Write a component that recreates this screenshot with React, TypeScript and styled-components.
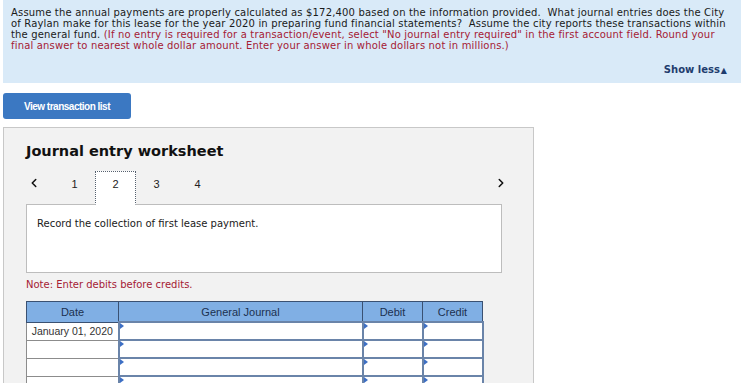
import React from 'react';
import styled, { createGlobalStyle } from 'styled-components';
import { ChevronLeft, ChevronRight } from 'lucide-react';

const GlobalStyle = createGlobalStyle`
  body {
    margin: 0;
    background: #ffffff;
    font-family: "DejaVu Sans", Verdana, sans-serif;
    color: #1a1a1a;
  }
`;

const Banner = styled.section`
  margin: 0 8px 0 3px;
  padding: 7px 8px 6px 8px;
  background: #d9eaf8;
`;

const Question = styled.p`
  margin: 0;
  font-size: 10px;
  line-height: 11px;
  letter-spacing: 0.17px;
  white-space: nowrap;
  color: #1a1a1a;
`;

const Hint = styled.span`
  color: #a52034;
`;

const ShowLessRow = styled.div`
  display: flex;
  justify-content: flex-end;
  margin-top: 13px;
  padding-right: 6px;
`;

const ShowLess = styled.span`
  font-size: 10px;
  line-height: 12px;
  font-weight: bold;
  color: #1f3d6e;
`;

const Arrow = styled.span`
  font-size: 8px;
  margin-left: 1px;
`;

const ListButton = styled.button`
  display: block;
  margin: 10px 0 0 3px;
  width: 128px;
  height: 26px;
  border: none;
  border-radius: 3px;
  background: #3b78c2;
  color: #ffffff;
  font-family: "Liberation Sans", Arial, sans-serif;
  font-size: 10px;
  font-weight: bold;
  letter-spacing: -0.5px;
  padding: 0;
`;

const Panel = styled.div`
  box-sizing: border-box;
  margin: 8px 0 0 3px;
  width: 531px;
  height: 300px;
  background: #f2f2f2;
  border: 1px solid #c8c8c8;
  border-bottom: none;
  padding: 14px 0 0 22px;
`;

const Title = styled.h2`
  margin: 0;
  font-size: 14.5px;
  line-height: 18px;
  font-weight: bold;
  color: #111;
`;

const NavRow = styled.div`
  display: flex;
  align-items: flex-start;
  width: 482px;
  margin-top: 11px;
  margin-bottom: -1px;
`;

const Chevron = styled.span<{ $right?: boolean }>`
  box-sizing: border-box;
  display: flex;
  justify-content: ${p => (p.$right ? 'flex-end' : 'flex-start')};
  width: 28px;
  padding-top: 5px;
  padding-left: ${p => (p.$right ? '0' : '1px')};
  margin-left: ${p => (p.$right ? 'auto' : '0')};
  color: #111;
`;

const Tab = styled.span<{ $active?: boolean }>`
  position: relative;
  z-index: 1;
  box-sizing: border-box;
  width: 41px;
  height: 34px;
  padding-top: 6px;
  text-align: center;
  font-family: "Liberation Sans", Arial, sans-serif;
  font-size: 11px;
  line-height: 13px;
  color: #222;
  background: ${p => (p.$active ? '#ffffff' : 'transparent')};
  border: 1px dotted ${p => (p.$active ? '#55606e' : 'transparent')};
  border-bottom-color: ${p => (p.$active ? '#ffffff' : 'transparent')};
`;

const DescBox = styled.div`
  box-sizing: border-box;
  width: 476px;
  height: 69px;
  background: #ffffff;
  border: 1px solid #bdbdbd;
  padding: 13px 0 0 10px;
  font-size: 10px;
  line-height: 12px;
  color: #1a1a1a;
`;

const Note = styled.div`
  margin-top: 6px;
  font-size: 10px;
  line-height: 12px;
  color: #a52034;
`;

const Table = styled.table`
  margin-top: 10px;
  border-collapse: collapse;
  font-family: "Liberation Sans", Arial, sans-serif;
  font-size: 11px;
`;

const Th = styled.th<{ $w: number }>`
  width: ${p => p.$w}px;
  height: 19px;
  padding: 0;
  background: #80afe4;
  border: 1px solid #3a5172;
  font-weight: normal;
  color: #1c3150;
  text-align: center;
`;

const DateCell = styled.td`
  height: 17px;
  padding: 0;
  background: #ffffff;
  border: 1px solid #8c8c8c;
  color: #333;
  font-size: 10.5px;
  text-align: center;
`;

const InputCell = styled.td`
  position: relative;
  height: 16px;
  padding: 0;
  background: #ffffff;
  border: 2px solid #6a84a9;

  &::before {
    content: '';
    position: absolute;
    left: 0;
    top: 0;
    border-top: 3px solid transparent;
    border-bottom: 3px solid transparent;
    border-left: 4px solid #3d6fc4;
  }
`;

const columns = [
  { label: 'Date', w: 91 },
  { label: 'General Journal', w: 243 },
  { label: 'Debit', w: 59 },
  { label: 'Credit', w: 59 },
];

const rows = ['January 01, 2020', '', '', ''];

export default function App() {
  return (
    <>
      <GlobalStyle />
      <Banner>
        <Question>
          Assume the annual payments are properly calculated as $172,400 based on the information provided.&nbsp; What journal entries does the City
          <br />
          of Raylan make for this lease for the year 2020 in preparing fund financial statements?&nbsp; Assume the city reports these transactions within
          <br />
          the general fund. <Hint>(If no entry is required for a transaction/event, select "No journal entry required" in the first account field. Round your
          <br />
          final answer to nearest whole dollar amount. Enter your answer in whole dollars not in millions.)</Hint>
        </Question>
        <ShowLessRow>
          <ShowLess>
            Show less<Arrow>▲</Arrow>
          </ShowLess>
        </ShowLessRow>
      </Banner>
      <ListButton>View transaction list</ListButton>
      <Panel>
        <Title>Journal entry worksheet</Title>
        <NavRow>
          <Chevron>
            <ChevronLeft size={14} strokeWidth={2.6} />
          </Chevron>
          {[1, 2, 3, 4].map(n => (
            <Tab key={n} $active={n === 2}>
              {n}
            </Tab>
          ))}
          <Chevron $right>
            <ChevronRight size={14} strokeWidth={2.6} />
          </Chevron>
        </NavRow>
        <DescBox>Record the collection of first lease payment.</DescBox>
        <Note>Note: Enter debits before credits.</Note>
        <Table>
          <thead>
            <tr>
              {columns.map(c => (
                <Th key={c.label} $w={c.w}>
                  {c.label}
                </Th>
              ))}
            </tr>
          </thead>
          <tbody>
            {rows.map((d, i) => (
              <tr key={i}>
                <DateCell>{d}</DateCell>
                <InputCell />
                <InputCell />
                <InputCell />
              </tr>
            ))}
          </tbody>
        </Table>
      </Panel>
    </>
  );
}
